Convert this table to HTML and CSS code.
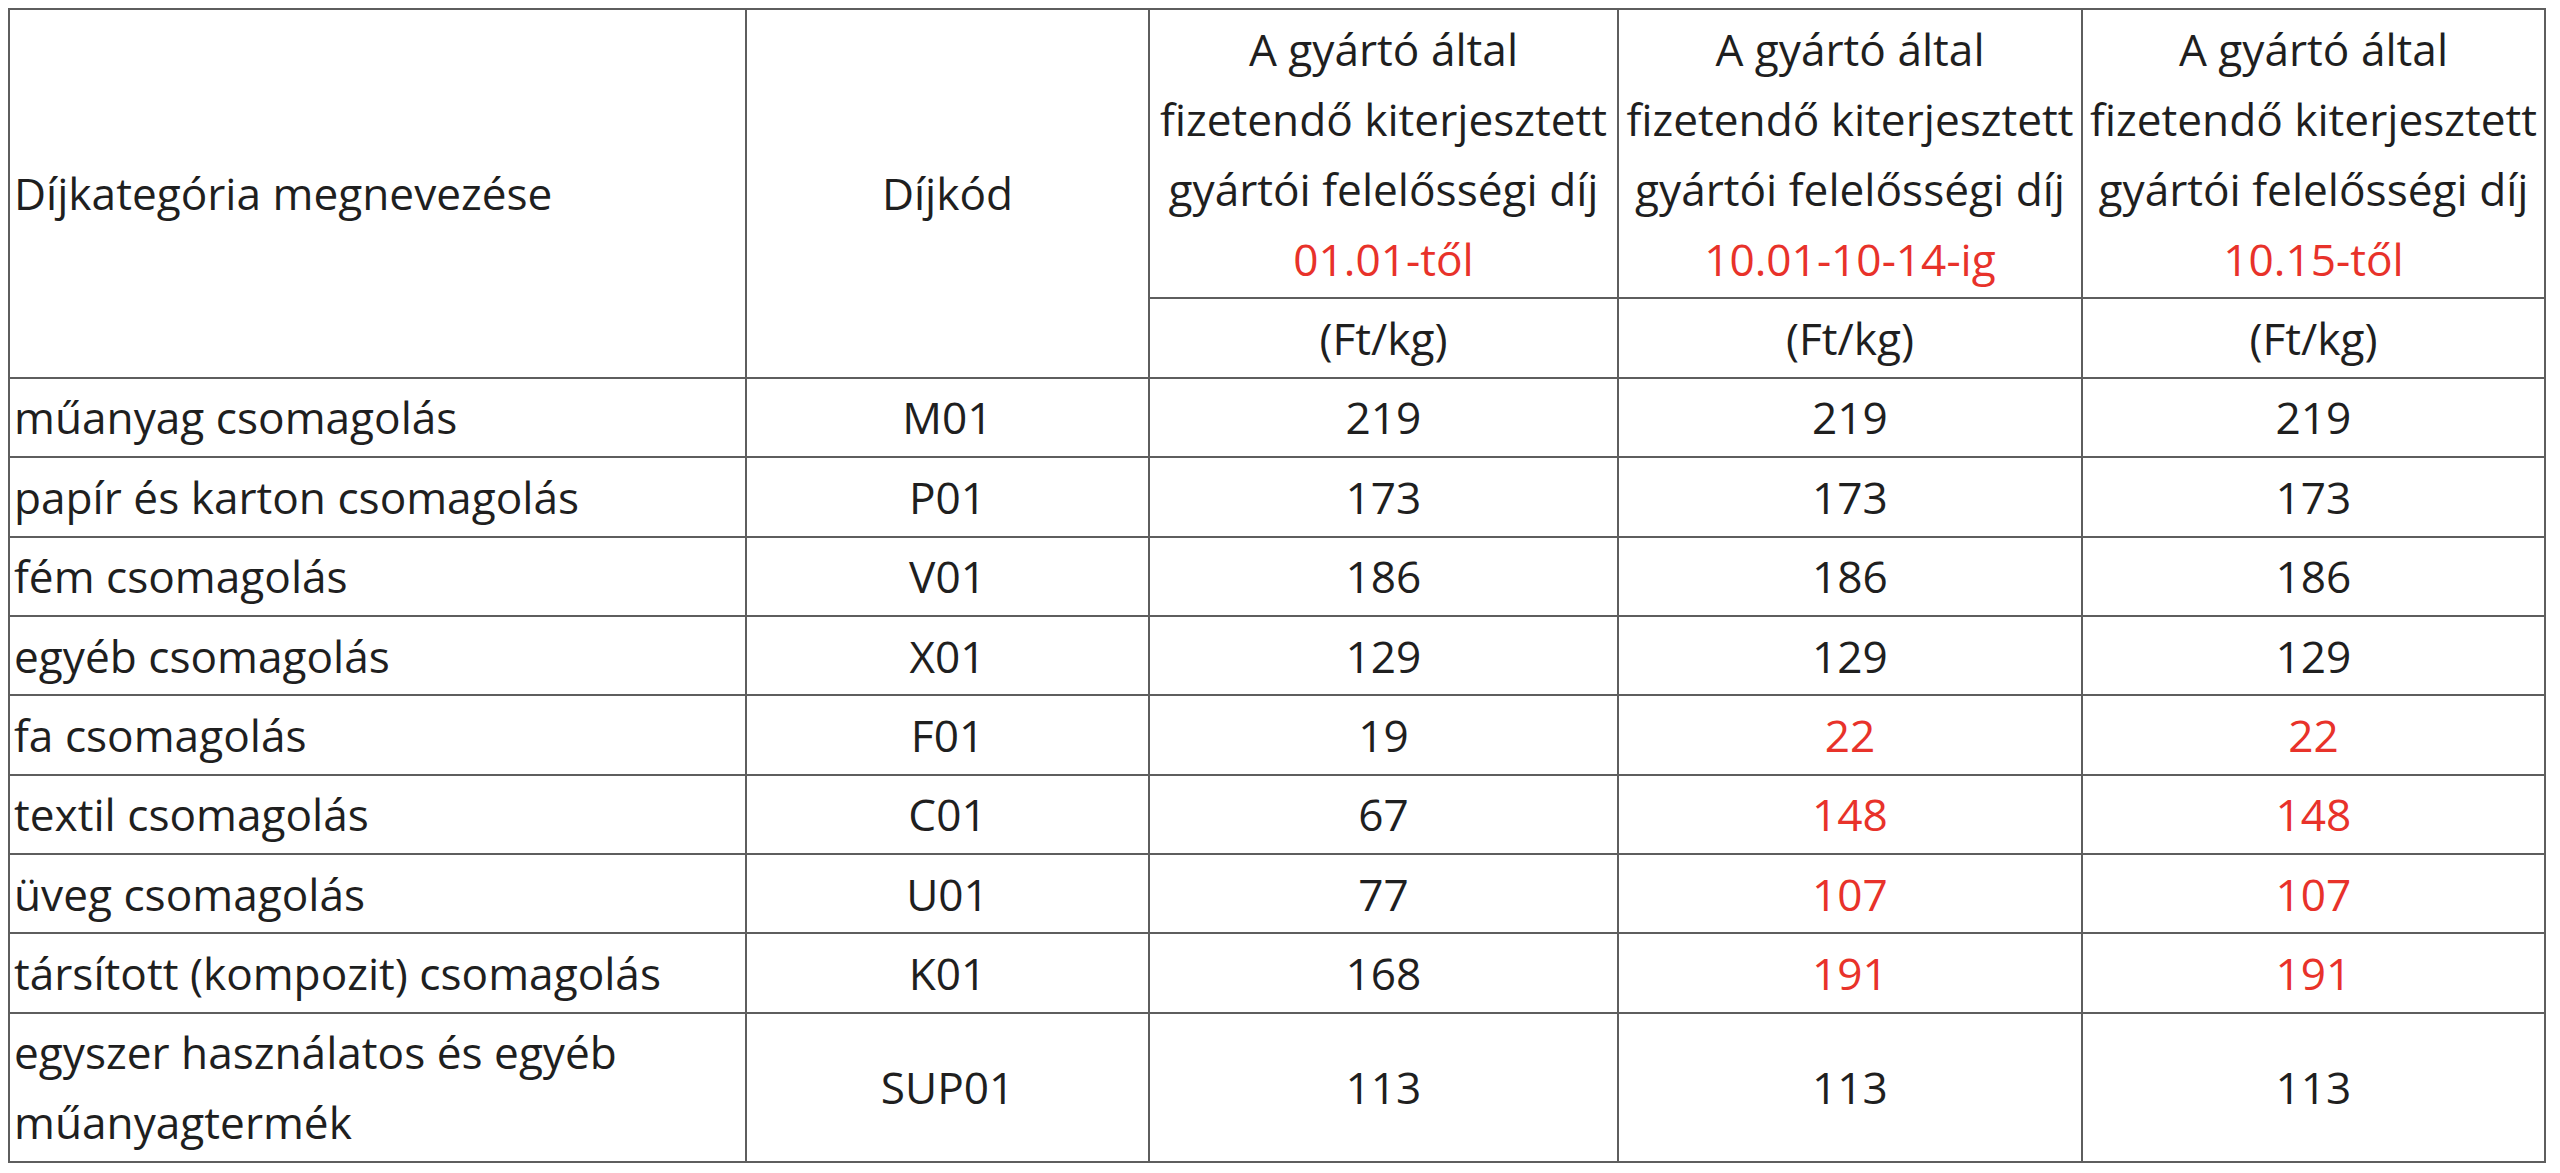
FILE: index.html
```html
<!DOCTYPE html>
<html lang="hu">
<head>
<meta charset="utf-8">
<title>Díjtáblázat</title>
<link rel="stylesheet" href="styles.css">
</head>
<body>
<table class="fees">
  <colgroup>
    <col class="c-name">
    <col class="c-code">
    <col class="c-fee1">
    <col class="c-fee2">
    <col class="c-fee3">
  </colgroup>
  <thead>
    <tr>
      <th rowspan="2" class="left">Díjkategória megnevezése</th>
      <th rowspan="2">Díjkód</th>
      <th>A gyártó által fizetendő kiterjesztett gyártói felelősségi díj <span class="red">01.01-től</span></th>
      <th>A gyártó által fizetendő kiterjesztett gyártói felelősségi díj <span class="red">10.01-10-14-ig</span></th>
      <th>A gyártó által fizetendő kiterjesztett gyártói felelősségi díj <span class="red">10.15-től</span></th>
    </tr>
    <tr>
      <th>(Ft/kg)</th>
      <th>(Ft/kg)</th>
      <th>(Ft/kg)</th>
    </tr>
  </thead>
  <tbody>
    <tr><td class="left">műanyag csomagolás</td><td>M01</td><td>219</td><td>219</td><td>219</td></tr>
    <tr><td class="left">papír és karton csomagolás</td><td>P01</td><td>173</td><td>173</td><td>173</td></tr>
    <tr><td class="left">fém csomagolás</td><td>V01</td><td>186</td><td>186</td><td>186</td></tr>
    <tr><td class="left">egyéb csomagolás</td><td>X01</td><td>129</td><td>129</td><td>129</td></tr>
    <tr><td class="left">fa csomagolás</td><td>F01</td><td>19</td><td class="red">22</td><td class="red">22</td></tr>
    <tr><td class="left">textil csomagolás</td><td>C01</td><td>67</td><td class="red">148</td><td class="red">148</td></tr>
    <tr><td class="left">üveg csomagolás</td><td>U01</td><td>77</td><td class="red">107</td><td class="red">107</td></tr>
    <tr><td class="left">társított (kompozit) csomagolás</td><td>K01</td><td>168</td><td class="red">191</td><td class="red">191</td></tr>
    <tr><td class="left">egyszer használatos és egyéb műanyagtermék</td><td>SUP01</td><td>113</td><td>113</td><td>113</td></tr>
  </tbody>
</table>
</body>
</html>
```
FILE: styles.css
```css
html, body {
  background: #ffffff;
}
body {
  margin: 8px;
  font-family: "Open Sans", "Noto Sans", sans-serif;
  color: #1f1f1f;
}
.fees {
  border-collapse: collapse;
  table-layout: fixed;
  width: 2537px;
  font-size: 44.2px;
  line-height: 70px;
}
.c-name { width: 737px; }
.c-code { width: 403px; }
.c-fee1 { width: 469px; }
.c-fee2 { width: 464px; }
.c-fee3 { width: 463px; }
.fees th,
.fees td {
  border: 2px solid #5e5e5e;
  padding: 3.7px 4px;
  text-align: center;
  vertical-align: middle;
  font-weight: normal;
}
.fees .left {
  text-align: left;
}
.red {
  color: #e8322a;
}
.fees th .red {
  display: block;
}
```
